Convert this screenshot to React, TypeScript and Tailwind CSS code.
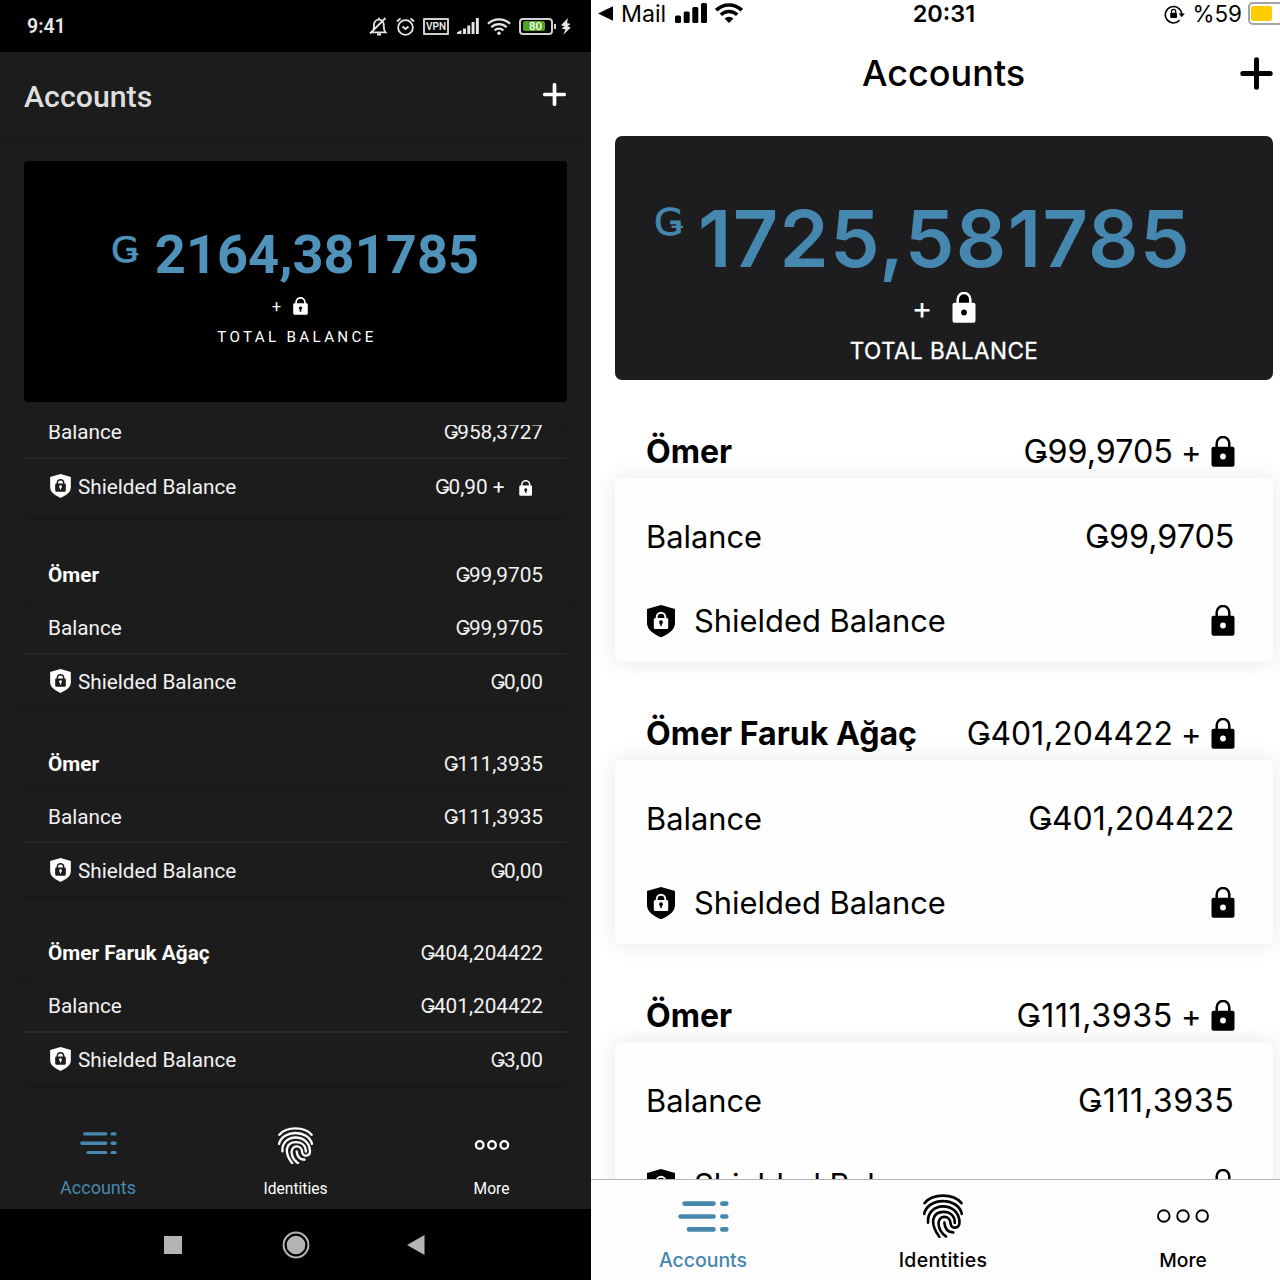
import React from "react";

type IconProps = { className?: string };

function Fingerprint({ className }: IconProps) {
  return (
    <svg viewBox="25 20 103 111" fill="none" stroke="currentColor" strokeWidth="6.8" strokeLinecap="round" className={className} preserveAspectRatio="none">
      <path d="M29 43C50 18 103 18 124 43" />
      <path d="M28 70C38 27 115 27 125 70" />
      <path d="M38 92C34 38 118 37 119 92C119 108 97 110 96 94C95 72 64 72 65 95C66 110 74 120 84 127" />
      <path d="M67 128C40 92 50 65 78 65C96 65 107 76 107 93" />
      <path d="M80 92C81 106 88 116 103 117" />
    </svg>
  );
}

function AccountsIcon({ className }: IconProps) {
  return (
    <svg viewBox="0 0 51 31" fill="none" stroke="currentColor" strokeWidth="4.6" strokeLinecap="round" className={className}>
      <path d="M6.5 2.6H35.5M2.5 15.5H35.5M11 28.4H35.5M44.3 2.6h4M44.3 15.5h4M44.3 28.4h4" />
    </svg>
  );
}

function Shield({ className, inner }: IconProps & { inner: string }) {
  return (
    <svg viewBox="0 0 28 32.5" className={className}>
      <path d="M14 0 28 4V18c0 7.4-7.6 11.400-14 14.500C7.600 29.400 0 25.400 0 18V4Z" fill="currentColor" />
      <path d="M9.700 13.500V12a4.300 4.300 0 0 1 8.600 0v1.500" fill="none" stroke={inner} strokeWidth="1.900" />
      <rect x="6.800" y="13" width="14.400" height="11" rx="1.500" fill={inner} />
      <circle cx="14" cy="17.200" r="1.900" fill="currentColor" />
      <path d="M13.200 17h1.600v4h-1.600z" fill="currentColor" />
    </svg>
  );
}

function SmallLock({ className }: IconProps) {
  return (
    <svg viewBox="0 0 15 18" className={className}>
      <path d="M3.100 7V5.200a4.400 4.400 0 0 1 8.800 0V7" fill="none" stroke="currentColor" strokeWidth="1.700" />
      <path fillRule="evenodd" d="M1.500 6.200h12a1.300 1.300 0 0 1 1.300 1.300v8.700a1.600 1.600 0 0 1-1.600 1.600H1.800A1.600 1.600 0 0 1 .2 16.200V7.500a1.300 1.300 0 0 1 1.300-1.300Zm6 3.200a1.700 1.700 0 0 0-.8 3.200v2.100h1.600v-2.100a1.700 1.700 0 0 0-.8-3.200Z" fill="currentColor" />
    </svg>
  );
}

function BigLock({ className, hole = "#fff", inside = "none" }: IconProps & { hole?: string; inside?: string }) {
  return (
    <svg viewBox="0 0 24 31" className={className}>
      <path d="M5.700 12V7.300a6.300 6.300 0 0 1 12.600 0V12" fill={inside} stroke="currentColor" strokeWidth="2.500" />
      <rect x=".5" y="10.700" width="23" height="20" rx="2" fill="currentColor" />
      <circle cx="12" cy="20.500" r="2.900" fill={hole} />
    </svg>
  );
}

function WifiIos({ className }: IconProps) {
  return (
    <svg viewBox="0 0 28 20" fill="none" stroke="currentColor" className={className}>
      <path d="M1.200 7.200a18.200 18.200 0 0 1 25.600 0" strokeWidth="3.600" />
      <path d="M5.800 11.800a11.700 11.700 0 0 1 16.400 0" strokeWidth="3.400" />
      <path d="M14 20l-4.400-4.400a6.300 6.300 0 0 1 8.800 0Z" fill="currentColor" stroke="none" />
    </svg>
  );
}

function AndroidStatus() {
  return (
    <div className="flex h-[52px] items-center bg-black pl-[27px] pr-[20px] text-[#e6e6e6]">
      <span className="mt-[2px] flex-1 text-[19.500px] font-semibold leading-none">9:41</span>
      <svg width="19" height="19" viewBox="0 0 19 19" fill="none" stroke="currentColor" strokeWidth="1.800" className="mr-[8px]">
        <path d="M3 15.300h13.500c-2-2-1.700-3.500-1.700-7C14.800 5 12.800 2.600 10 2.600S5 5 5 8.300c0 3.500 0 5-2 7ZM8 17.500h4M10 .8v2M1 16.500 16.500 1" />
      </svg>
      <svg width="19" height="19" viewBox="0 0 19 19" fill="none" stroke="currentColor" strokeWidth="1.800" className="mr-[8px]">
        <circle cx="9.500" cy="10.500" r="7.400" />
        <path d="M1 4.500 4.500 1.300M18 4.500l-3.500-3.200M6.500 9.500l3 2.500 3-2.500" />
      </svg>
      <span className="mr-[8px] flex h-[17px] w-[26px] items-center justify-center rounded-[1px] border-2 border-[#cfcfcf] pt-[1px] text-[10px] font-semibold leading-none">VPN</span>
      <svg width="22" height="16" viewBox="0 0 22 16" fill="currentColor" className="mr-[8px]">
        <path d="M0 16v-1.500L4.500 12v4ZM6 10.500h3V16H6ZM10.300 7.500h2.900V16h-2.900ZM14.600 4h2.900v12h-2.900ZM18.900 0h2.900v16h-2.900Z" />
      </svg>
      <svg width="24" height="17" viewBox="0 0 24 17" fill="none" stroke="currentColor" strokeWidth="2.200" className="mr-[8px]">
        <path d="M1 5.800a15.700 15.700 0 0 1 22 0M4.300 9.200a11 11 0 0 1 15.400 0M7.600 12.500a6.300 6.300 0 0 1 8.800 0" />
        <circle cx="12" cy="15.200" r="1.800" fill="currentColor" stroke="none" />
      </svg>
      <span className="flex h-[17px] w-[34px] items-center rounded-[4px] border-2 border-[#d2d2d2] p-[1.500px]">
        <span className="flex h-full w-[22px] items-center justify-center rounded-[2px] bg-[#4ca51c] pl-[4px] pt-[1px] text-[11.500px] font-medium leading-none text-white">80</span>
      </span>
      <span className="ml-[1px] mr-[5px] h-[5px] w-[2px] bg-[#d2d2d2]" />
      <svg width="10" height="17" viewBox="0 0 10 17" fill="currentColor">
        <path d="M7 0 0 7.300l3.500 1.200L.5 10.500l4 1-2.500 5.500L9.800 9.500 6.500 8.300 9.500 6 6 5Z" />
      </svg>
    </div>
  );
}

function Amount({ value }: { value: string }) {
  return (
    <span className="whitespace-nowrap">
      <span className="-mr-[1.500px] text-[20px]">Ǥ</span>
      {value}
    </span>
  );
}

function DarkShielded({ children, className = "" }: { children: React.ReactNode; className?: string }) {
  return (
    <div className={`flex items-center pl-[26px] pr-6 ${className}`}>
      <Shield inner="#1c1c1c" className="-mt-[2px] mr-[7px] h-[24px] w-[21px] text-white" />
      <span className="flex-1">Shielded Balance</span>
      {children}
    </div>
  );
}

function DarkGroup({ name, total, balance, shielded }: { name: string; total: string; balance: string; shielded: string }) {
  return (
    <section>
      <div className="flex h-[82.500px] items-end justify-between px-6 pb-[14px]">
        <span className="font-bold text-white">{name}</span>
        <Amount value={total} />
      </div>
      <div className="rounded-md shadow-[0_2px_4px_rgba(0,0,0,0.16)]">
        <div className="flex h-[53px] items-center justify-between px-6 pt-[3px]">
          <span>Balance</span>
          <Amount value={balance} />
        </div>
        <div className="h-[1.500px] bg-[#2b2b2b]" />
        <DarkShielded className="h-[52.250px] pt-[3px]">
          <Amount value={shielded} />
        </DarkShielded>
      </div>
    </section>
  );
}

function AndroidScreen() {
  return (
    <div className="flex h-[1280px] w-[591px] shrink-0 flex-col bg-[#1c1c1c] font-[Roboto,Inter,sans-serif] text-[#f2f2f2]">
      <AndroidStatus />
      <header className="flex h-[85px] items-center justify-between pl-6 pr-[25px] shadow-[0_1px_2px_rgba(0,0,0,0.05)]">
        <h1 className="mt-[6px] text-[30.300px] font-medium leading-none text-[#dedede]">Accounts</h1>
        <svg width="23" height="23" viewBox="0 0 23 23" stroke="#fff" strokeWidth="3.700" strokeLinecap="round">
          <path d="M11.500 1.800v19.400M1.800 11.500h19.400" />
        </svg>
      </header>

      <div className="mx-6 mt-6 flex h-[240.500px] flex-col items-center rounded-[4px] bg-black">
        <div className="mt-[66px] flex h-[56px] items-start text-[#4f93bb]">
          <span className="-ml-[1px] mr-[16px] mt-[5px] font-['DejaVu_Sans'] text-[36px] leading-none [-webkit-text-stroke:0.700px_#4f93bb]">Ǥ</span>
          <span className="text-[54.200px] font-bold leading-[56px]">2164,381785</span>
        </div>
        <div className="mt-[14px] flex h-[20px] items-center pr-[11px] text-white">
          <span className="mr-[12px] text-[16px] leading-none">+</span>
          <SmallLock className="-mt-[2px] h-[18px] w-[15px]" />
        </div>
        <p className="mt-[12px] pl-[3px] text-[15.200px] leading-[16px] tracking-[3.300px] text-white">TOTAL BALANCE</p>
      </div>

      <div className="mx-6 mt-[23.500px] h-[675px] text-[20.750px] leading-[22px]">
        <div className="h-[92px] overflow-hidden rounded-b-md shadow-[0_2px_4px_rgba(0,0,0,0.16)]">
          <div className="-mt-[20px] flex h-[53px] items-center justify-between px-6 pt-[1px]">
            <span>Balance</span>
            <Amount value="958,3727" />
          </div>
          <div className="-mt-[0.500px] h-[1.500px] bg-[#2b2b2b]" />
          <DarkShielded className="h-[56px] pb-[1px]">
            <Amount value="0,90 +" />
            <SmallLock className="ml-[14px] mr-[11px] mt-[3px] h-[16px] w-[13.500px] text-white" />
          </DarkShielded>
        </div>
        <DarkGroup name="Ömer" total="99,9705" balance="99,9705" shielded="0,00" />
        <DarkGroup name="Ömer" total="111,3935" balance="111,3935" shielded="0,00" />
        <DarkGroup name="Ömer Faruk Ağaç" total="404,204422" balance="401,204422" shielded="3,00" />
      </div>

      <nav className="grid h-[109px] grid-cols-3 text-[15.600px] leading-[18px] text-white">
        <div className="flex flex-col items-center justify-end pb-[12px] pr-[1px] text-[#4789b0]">
          <AccountsIcon className="mb-[25px] h-[22.500px] w-[37px]" />
          <span className="text-[18px]">Accounts</span>
        </div>
        <div className="flex flex-col items-center justify-end pb-[11px]">
          <Fingerprint className="mb-[16px] h-[37.500px] w-[35px]" />
          <span>Identities</span>
        </div>
        <div className="flex flex-col items-center justify-end pb-[11px] pr-[2px]">
          <svg width="36" height="12" viewBox="0 0 36 12" fill="none" stroke="currentColor" strokeWidth="2.300" className="mb-[29px]">
            <circle cx="5.700" cy="6" r="3.800" />
            <circle cx="18" cy="6" r="3.800" />
            <circle cx="30.300" cy="6" r="3.800" />
          </svg>
          <span>More</span>
        </div>
      </nav>

      <div className="flex flex-1 items-center bg-black pl-[164px] text-[#b4b4b4]">
        <span className="h-[18px] w-[18px] bg-current" />
        <svg width="28" height="28" viewBox="0 0 28 28" className="ml-[99.500px]">
          <circle cx="14" cy="14" r="12.400" fill="none" stroke="currentColor" strokeWidth="2" />
          <circle cx="14" cy="14" r="9.300" fill="currentColor" />
        </svg>
        <svg width="18" height="20" viewBox="0 0 18 20" fill="currentColor" className="ml-[97.500px]">
          <path d="M0 10 17.500 0v20Z" />
        </svg>
      </div>
    </div>
  );
}

function LightGroup({ name, total, size, tracking = "" }: { name: string; total: string; size: string; tracking?: string }) {
  return (
    <section className="shrink-0">
      <div className="relative z-10 flex h-[98px] items-end pb-[8px] pl-[31px] pr-[38.500px]">
        <span className="flex-1 text-[32.100px] font-bold leading-[36px]">{name}</span>
        <span className={`whitespace-nowrap leading-[36px] ${size} ${tracking}`}>
          Ǥ{total}
        </span>
        <span className="ml-[8px] text-[31px] leading-[36px]">+</span>
        <BigLock className="mb-[3px] ml-[9px] h-[31px] w-[24px]" />
      </div>
      <div className="h-[184px] rounded-[7px] bg-[#fefefe] pl-[31px] pr-[38.500px] pt-[41px] shadow-[0_0_22px_rgba(0,0,0,0.10)]">
        <div className="flex h-[36px] items-center justify-between leading-[36px]">
          <span className="text-[30.800px]">Balance</span>
          <span className={`${size} ${tracking}`}>Ǥ{total}</span>
        </div>
        <div className="mt-[48px] flex h-[36px] items-center">
          <Shield inner="#fff" className="-mt-[1px] ml-[1px] mr-[19px] h-[32.500px] w-[28px]" />
          <span className="flex-1 text-[30.900px] leading-[36px]">Shielded Balance</span>
          <BigLock className="-mt-[1px] h-[31px] w-[24px]" />
        </div>
      </div>
    </section>
  );
}

function IosScreen() {
  return (
    <div className="flex h-[1280px] w-[689px] flex-col overflow-hidden bg-white font-[Inter,sans-serif] text-black">
      <div className="grid h-[28px] w-[706px] shrink-0 grid-cols-3 items-center">
        <div className="flex items-center pl-[7px]">
          <svg width="16" height="15" viewBox="0 0 16 15"><path d="M0 7.500 15 .3v14.400Z" /></svg>
          <span className="ml-[7px] mt-[1px] text-[23.200px] leading-none">Mail</span>
          <svg width="32" height="20" viewBox="0 0 32 20" className="-mt-[2px] ml-[9px]">
            <rect x="0" y="12.500" width="6" height="7.500" rx="1.500" />
            <rect x="8.700" y="8.500" width="6" height="11.500" rx="1.500" />
            <rect x="17.300" y="4" width="6" height="16" rx="1.500" />
            <rect x="26" y="0" width="6" height="20" rx="1.500" />
          </svg>
          <WifiIos className="-mt-[2px] ml-[8px] h-[20px] w-[28px]" />
        </div>
        <span className="text-center text-[23.500px] font-semibold leading-none">20:31</span>
        <div className="flex items-center justify-end pr-[7px]">
          <svg width="21" height="20" viewBox="0 0 21 20" className="-mt-[1px]">
            <path d="M15.600 16.300A8.200 8.200 0 1 1 17.700 10" fill="none" stroke="currentColor" strokeWidth="1.600" />
            <path d="M14.600 9.500h6.200l-3.100 3.800Z" />
            <rect x="6.200" y="8.700" width="6.800" height="5.200" rx="1" />
            <path d="M7.500 9V7.400a2.100 2.100 0 0 1 4.200 0V9" fill="none" stroke="currentColor" strokeWidth="1.200" />
          </svg>
          <span className="ml-[8px] text-[22.400px] leading-none">%59</span>
          <span className="-mt-[2px] ml-[6px] flex h-[23px] w-[42px] items-center rounded-[5px] border-2 border-[#a3a3a3] p-[1px]">
            <span className="h-[15px] w-[21px] rounded-[2px] bg-[#ffcc00]" />
          </span>
        </div>
      </div>

      <header className="grid h-[108px] shrink-0 grid-cols-3 items-start pt-[25px]">
        <h1 className="col-start-2 -ml-[1px] w-[248px] text-center text-[36px] font-medium leading-[40px]">Accounts</h1>
        <svg width="33" height="33" viewBox="0 0 33 33" stroke="#000" strokeWidth="5" strokeLinecap="round" className="mr-[7px] mt-[4px] justify-self-end">
          <path d="M16.500 2.800v27.400M2.800 16.500h27.400" />
        </svg>
      </header>

      <div className="mx-6 w-[658px] flex-1 overflow-visible">
        <div className="flex h-[244.250px] flex-col items-center rounded-[7px] bg-[#1d1d1f] text-white">
          <div className="mt-[62px] flex h-[80px] items-start self-start pl-[39px] text-[#4587ae]">
            <span className="mr-[15px] mt-[5px] w-[29px] font-['DejaVu_Sans'] text-[38px] leading-none [-webkit-text-stroke:0.700px_#4587ae]">Ǥ</span>
            <span className="text-[79px] font-semibold leading-[80px] tracking-[1.300px]">1725,581785</span>
          </div>
          <div className="mt-[13px] flex h-[32px] items-center">
            <span className="mr-[20px] text-[31px] leading-none">+</span>
            <BigLock hole="#000" inside="#000" className="h-[31px] w-[24px]" />
          </div>
          <p className="mt-[16px] text-[22.500px] leading-[24px] tracking-[0.420px] [-webkit-text-stroke:0.300px_#fff]">TOTAL BALANCE</p>
        </div>
        <div className="h-[799px] w-[658px]">
          <LightGroup name="Ömer" total="99,9705" size="text-[32.300px]" />
          <LightGroup name="Ömer Faruk Ağaç" total="401,204422" size="text-[31.900px]" />
          <LightGroup name="Ömer" total="111,3935" size="text-[32.200px]" tracking="tracking-[0.600px]" />
        </div>
      </div>

      <nav className="relative z-20 h-[101px] shrink-0 border-t border-[#b4b4b4] bg-[#fdfdfd]">
        <div className="-ml-2 grid w-[720px] grid-cols-3 text-[19.500px] font-medium leading-[22px]">
          <div className="flex h-[91px] flex-col items-center justify-end text-[#4587ae]">
            <AccountsIcon className="mb-[17px] h-[31px] w-[51px]" />
            <span className="tracking-[-0.050px]">Accounts</span>
          </div>
          <div className="flex h-[91px] flex-col items-center justify-end">
            <Fingerprint className="mb-[11px] h-[44px] w-[40px]" />
            <span className="tracking-[0.300px]">Identities</span>
          </div>
          <div className="flex h-[91px] flex-col items-center justify-end">
            <svg width="54" height="16" viewBox="0 0 54 16" fill="none" stroke="currentColor" strokeWidth="1.900" className="mb-[25px]">
              <circle cx="7.800" cy="8" r="5.800" />
              <circle cx="27" cy="8" r="5.800" />
              <circle cx="46.200" cy="8" r="5.800" />
            </svg>
            <span className="text-[19.200px]">More</span>
          </div>
        </div>
      </nav>
    </div>
  );
}

export default function App() {
  return (
    <div className="flex h-[1280px] w-[1280px] overflow-hidden">
      <AndroidScreen />
      <IosScreen />
    </div>
  );
}
